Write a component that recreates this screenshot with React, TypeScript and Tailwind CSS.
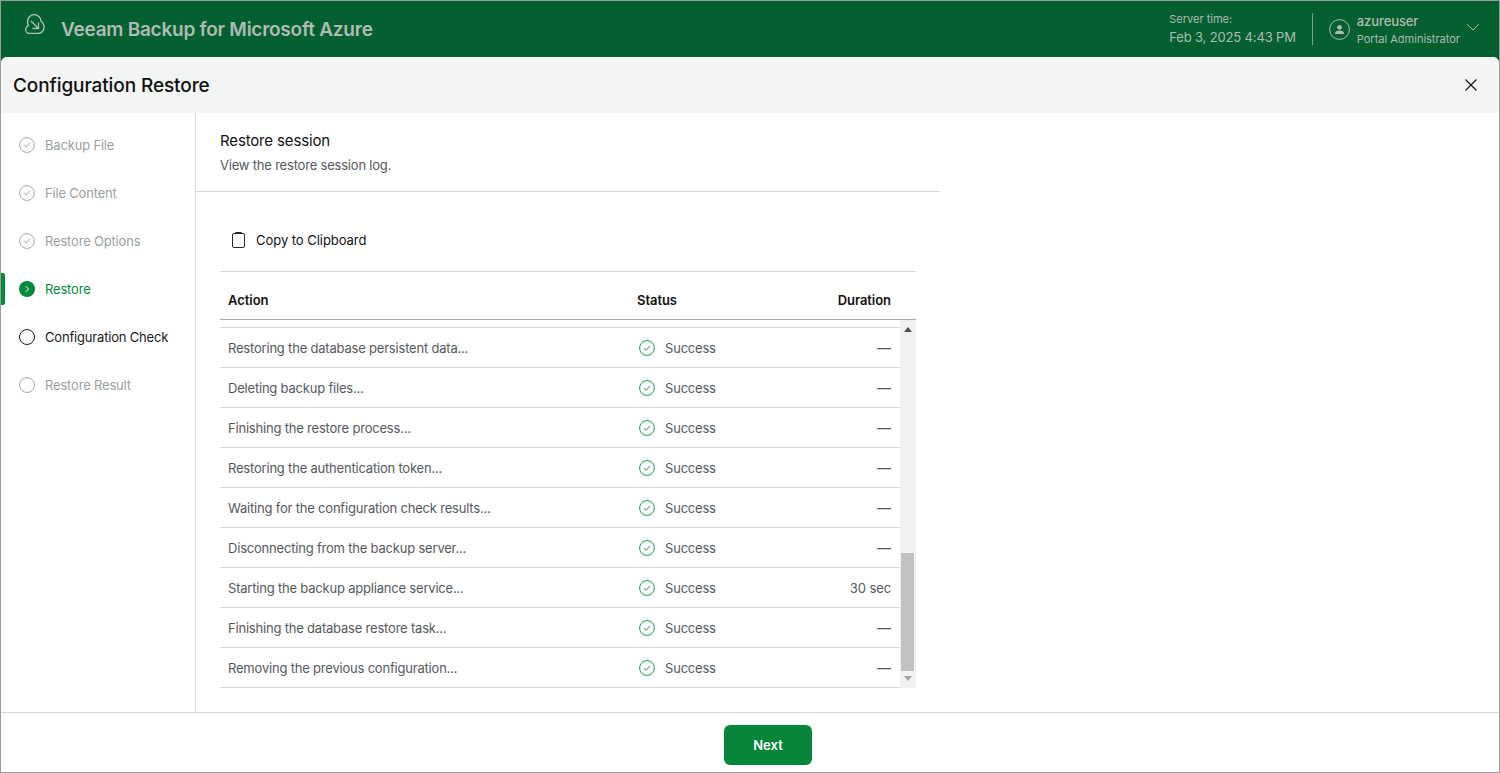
import React from "react";

const rows: [string, string][] = [
  ["Restoring the database persistent data...", "—"],
  ["Deleting backup files...", "—"],
  ["Finishing the restore process...", "—"],
  ["Restoring the authentication token...", "—"],
  ["Waiting for the configuration check results...", "—"],
  ["Disconnecting from the backup server...", "—"],
  ["Starting the backup appliance service...", "30 sec"],
  ["Finishing the database restore task...", "—"],
  ["Removing the previous configuration...", "—"],
];

function Check({ color, size = 16 }: { color: string; size?: number }) {
  return (
    <svg width={size} height={size} viewBox="0 0 16 16" fill="none" className="shrink-0">
      <circle cx="8" cy="8" r="7.400" stroke={color} strokeWidth="1" />
      <path d="M5 8.200 7.100 10.300 11 6" stroke={color} strokeWidth="1" />
    </svg>
  );
}

function Step({ label, state }: { label: string; state: "done" | "active" | "next" | "off" }) {
  const text =
    state === "active" ? "text-[#04893b]" : state === "next" ? "text-[#1a1a1a]" : "text-[#9a9fa0]";
  return (
    <div className="relative flex h-12 items-center pl-[18px]">
      {state === "active" && <div className="absolute left-0 top-[8px] h-8 w-[4px] rounded-r-[2px] bg-[#04893b]" />}
      <span className="flex h-4 w-4 items-center justify-center">
        {state === "done" && <Check color="#a3a7a8" />}
        {state === "active" && (
          <svg width="16" height="16" viewBox="0 0 16 16" fill="none">
            <circle cx="8" cy="8" r="8" fill="#04893b" />
            <path d="M6.800 5.200 9.600 8 6.800 10.800" stroke="#fff" strokeWidth="1" />
          </svg>
        )}
        {state === "next" && <span className="h-4 w-4 rounded-full border border-[#1a1a1a]" />}
        {state === "off" && <span className="h-4 w-4 rounded-full border border-[#a3a7a8]" />}
      </span>
      <span className={`ml-[10px] pt-[2px] text-[13px] tracking-[-0.18px] ${text}`}>{label}</span>
    </div>
  );
}

export default function App() {
  return (
    <div className="flex h-[773px] w-[1500px] flex-col overflow-hidden border border-[#9b9b9b] bg-[#056030] font-['Inter',sans-serif]">
      <header className="flex h-[56px] shrink-0 items-center text-[#b0bbb4]">
        <svg width="20" height="20" viewBox="0 0 20 20" fill="none" className="mb-[10px] ml-[24px]" stroke="#b4c0b8" strokeWidth="1.300">
          <path d="M4.500 19.400C2.200 19.400.7 17.500.7 15.500c0-1.900 1.200-3.200 2.900-4C2.800 10.300 2.500 9 2.500 7.700 2.500 3.900 5.500.7 9.300.7c3.600 0 6.500 2.800 6.700 6.300 1.900 1.500 3.100 3.500 3.100 6 0 3.500-2.700 6.400-6.100 6.400H4.500Z" />
          <path d="M6 7l7.500 7.500M13.500 8.500v6h-6" />
        </svg>
        <div className="ml-[16px] pt-[2px] text-[19px] font-semibold tracking-[-0.25px]">Veeam Backup for Microsoft Azure</div>
        <div className="ml-auto flex items-center">
          <div className="flex flex-col pr-4">
            <span className="text-[11px] leading-[16px]">Server time:</span>
            <span className="mt-[1px] mb-[2px] text-[13px] leading-[18px] tracking-[-0.15px]">Feb 3, 2025 4:43 PM</span>
          </div>
          <div className="h-8 w-px bg-[#7fa08c]" />
          <svg width="21" height="21" viewBox="0 0 21 21" fill="none" className="ml-4">
            <circle cx="10.500" cy="10.500" r="9.900" stroke="#b0bbb4" strokeWidth="1" />
            <circle cx="10.500" cy="8.300" r="2.400" fill="#b0bbb4" />
            <path d="M6 15c0-2.600 1.800-3.500 4.500-3.500S15 12.400 15 15H6Z" fill="#b0bbb4" />
          </svg>
          <div className="ml-[7px] flex flex-col pt-[1px]">
            <span className="text-[13px] font-medium leading-[18px] tracking-[-0.1px]">azureuser</span>
            <span className="mt-[1px] text-[11px] leading-[16px]">Portal Administrator</span>
          </div>
          <svg width="14" height="8" viewBox="0 0 14 8" fill="none" className="mb-[4px] ml-[6px] mr-[19px]">
            <path d="M1 1.200 7 7l6-5.800" stroke="#a9b8ae" strokeWidth="1" />
          </svg>
        </div>
      </header>

      <div className="flex min-h-0 flex-1 flex-col rounded-t-[6px] bg-white">
        <div className="flex h-[56px] shrink-0 items-center justify-between rounded-t-[6px] bg-[#f3f4f4] pl-3 pr-[21px]">
          <h1 className="pt-[2px] text-[19px] font-medium tracking-[-0.1px] text-[#111]">Configuration Restore</h1>
          <svg width="14" height="14" viewBox="0 0 14 14" fill="none">
            <path d="M1.500 1.500 12.500 12.500M12.500 1.500 1.500 12.500" stroke="#111" strokeWidth="1.100" />
          </svg>
        </div>

        <div className="flex min-h-0 flex-1">
          <nav className="w-[195px] shrink-0 border-r border-[#d5d6d6] pt-2">
            <Step label="Backup File" state="done" />
            <Step label="File Content" state="done" />
            <Step label="Restore Options" state="done" />
            <Step label="Restore" state="active" />
            <Step label="Configuration Check" state="next" />
            <Step label="Restore Result" state="off" />
          </nav>

          <main className="w-[744px] shrink-0">
            <div className="h-[79px] border-b border-[#d5d6d6] pl-6 pt-[18px]">
              <div className="text-[15px] leading-[20px] tracking-[-0.15px] text-[#111]">Restore session</div>
              <div className="mt-[4px] text-[13px] leading-[20px] tracking-[-0.2px] text-[#55595c]">View the restore session log.</div>
            </div>
            <div className="px-6">
              <div className="flex h-[80px] items-center border-b border-[#d5d6d6] pl-3 pt-[17px]">
                <svg width="13" height="16" viewBox="0 0 13 16" fill="none">
                  <rect x="0.500" y="1.500" width="12" height="14" rx="1.500" stroke="#111" strokeWidth="0.900" />
                  <path d="M3.500 1.500V.500h6v1" stroke="#111" strokeWidth="0.900" />
                </svg>
                <span className="ml-[11px] pt-[2px] text-[13px] tracking-[-0.04px] text-[#111]">Copy to Clipboard</span>
              </div>
              <div className="flex h-[48px] items-center border-b border-[#a9abab] pl-2 pr-[25px] pt-[10px] text-[13px] font-semibold tracking-[-0.05px] text-[#111]">
                <span className="w-[409px]">Action</span>
                <span>Status</span>
                <span className="ml-auto">Duration</span>
              </div>
              <div className="flex h-[368px]">
                <div className="flex-1 pt-[7px]">
                  {rows.map(([action, duration]) => (
                    <div
                      key={action}
                      className="flex h-10 items-center border-t border-[#d5d6d6] pl-2 pr-[9px] text-[13px] tracking-[-0.2px] text-[#55595c] last:h-[41px] last:border-b"
                    >
                      <span className="w-[411px] pt-[2px]">{action}</span>
                      <Check color="#169a4f" />
                      <span className="ml-[10px] pt-[2px]">Success</span>
                      <span className={duration === "—" ? "ml-auto text-[14px] tracking-normal" : "ml-auto pt-[2px] tracking-[-0.1px]"}>{duration}</span>
                    </div>
                  ))}
                </div>
                <div className="flex w-4 flex-col items-center bg-[#f1f1f1]">
                  <svg width="8" height="5" viewBox="0 0 8 5" className="mt-[7px]"><path d="M4 0 8 5H0Z" fill="#505050" /></svg>
                  <div className="mr-[1px] mt-[221px] h-[118px] w-[13px] bg-[#c1c1c1]" />
                  <svg width="8" height="5" viewBox="0 0 8 5" className="mt-[5px]"><path d="M0 0h8L4 5Z" fill="#a3a3a3" /></svg>
                </div>
              </div>
            </div>
          </main>
        </div>

        <footer className="flex h-[60px] shrink-0 items-center justify-center border-t border-[#d5d6d6] pl-[36px] pt-[4px]">
          <button className="h-10 w-[88px] rounded-[6px] bg-[#04853a] pt-[2px] text-[13px] font-semibold text-white">Next</button>
        </footer>
      </div>
    </div>
  );
}
